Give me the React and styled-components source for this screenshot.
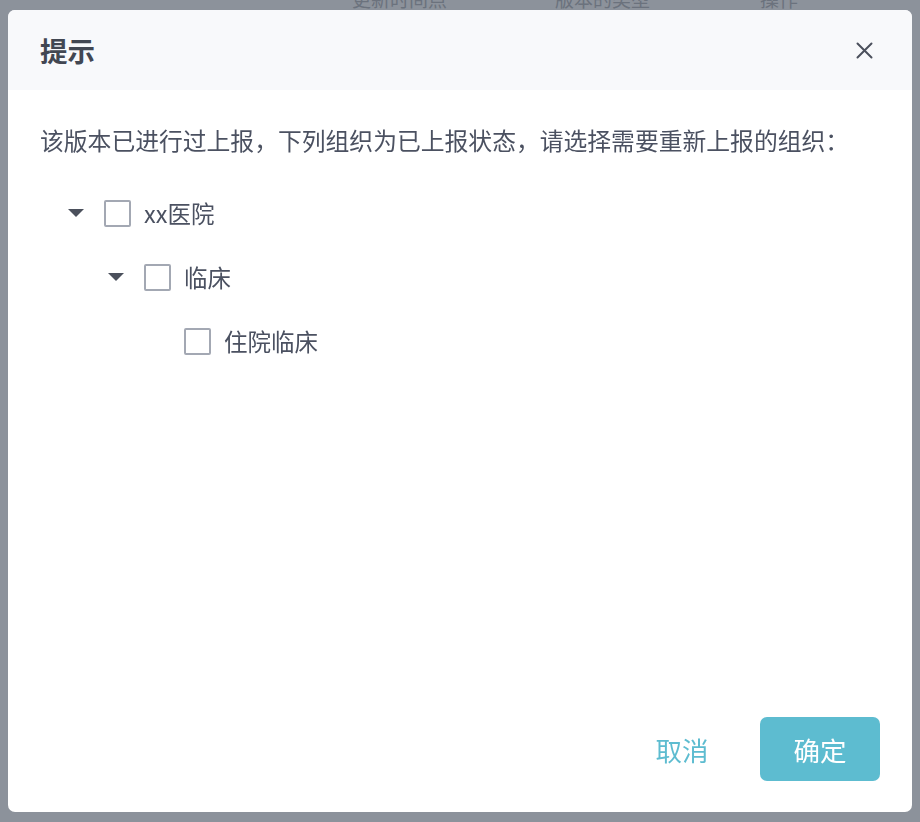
import React, { useState } from 'react'
import styled, { createGlobalStyle } from 'styled-components'

const GlobalStyle = createGlobalStyle`
  html, body {
    margin: 0;
    padding: 0;
    background: #ffffff;
    font-family: "Noto Sans CJK SC", "Noto Sans", "Liberation Sans", sans-serif;
  }
  * {
    box-sizing: border-box;
  }
`

const tree = [
  {
    id: 'hospital',
    label: 'xx医院',
    children: [
      {
        id: 'clinic',
        label: '临床',
        children: [{ id: 'inpatient', label: '住院临床', children: [] }],
      },
    ],
  },
]

const Page = styled.div`
  height: 822px;
  overflow: hidden;
`

const PageHeader = styled.div`
  display: grid;
  grid-template-columns: 203px 205px 1fr;
  padding-left: 352px;
  margin-top: -12px;
  font-size: 19px;
  line-height: 22px;
  color: #bdbfc3;
`

const Overlay = styled.div`
  position: fixed;
  inset: 0;
  background: rgba(25, 37, 55, 0.5);
  display: flex;
  align-items: center;
  justify-content: center;
`

const Dialog = styled.div`
  width: 904px;
  height: 802px;
  background: #ffffff;
  border-radius: 7px;
  overflow: hidden;
  display: flex;
  flex-direction: column;
`

const Header = styled.div`
  height: 80px;
  flex: none;
  background: #f8f9fb;
  display: flex;
  align-items: center;
  justify-content: space-between;
  padding: 0 38px 0 32px;
`

const Title = styled.h2`
  margin: 0;
  font-size: 27.5px;
  font-weight: 700;
  color: #424752;
`

const CloseButton = styled.button`
  width: 20px;
  height: 20px;
  border: none;
  background: none;
  padding: 0;
  display: flex;
  align-items: center;
  justify-content: center;
  cursor: pointer;
  color: #4b505c;
`

const Body = styled.div`
  flex: 1;
  padding: 34px 32px 0;
`

const Message = styled.p`
  margin: 0 0 25px;
  font-size: 23.8px;
  line-height: 32px;
  color: #4b5161;
  white-space: nowrap;
`

const Row = styled.div`
  display: flex;
  align-items: center;
  height: 64px;
  padding-left: ${(p) => 16 + p.$level * 40}px;
`

const Toggle = styled.span`
  width: 40px;
  height: 40px;
  display: flex;
  align-items: center;
  justify-content: center;
  color: #4b505c;
  cursor: pointer;
`

const Caret = styled.span`
  width: 0;
  height: 0;
  border-left: 8px solid transparent;
  border-right: 8px solid transparent;
  border-top: 8px solid currentColor;
`

const Checkbox = styled.span`
  width: 27px;
  height: 27px;
  margin-left: 8px;
  border: 2px solid #a3a8b3;
  border-radius: 2px;
  background: ${(p) => (p.$checked ? '#5dbcd0' : '#ffffff')};
  cursor: pointer;
`

const Label = styled.span`
  margin-left: 13px;
  font-size: 23.5px;
  color: #4b5161;
`

const Footer = styled.div`
  display: flex;
  justify-content: flex-end;
  gap: 18px;
  padding: 0 32px 31px;
`

const Button = styled.button`
  width: 120px;
  height: 64px;
  border: none;
  border-radius: 7px;
  font-family: inherit;
  font-size: 26.5px;
  cursor: pointer;
  background: ${(p) => (p.$primary ? '#5dbcd0' : 'transparent')};
  color: ${(p) => (p.$primary ? '#ffffff' : '#5dbcd0')};
`

const TreeNode = ({ node, level, checked, onToggle }) => {
  const hasChildren = node.children.length > 0
  return (
    <>
      <Row $level={level}>
        <Toggle>{hasChildren && <Caret />}</Toggle>
        <Checkbox $checked={checked[node.id]} onClick={() => onToggle(node.id)} />
        <Label>{node.label}</Label>
      </Row>
      {node.children.map((child) => (
        <TreeNode
          key={child.id}
          node={child}
          level={level + 1}
          checked={checked}
          onToggle={onToggle}
        />
      ))}
    </>
  )
}

const App = () => {
  const [checked, setChecked] = useState({})
  const toggle = (id) => setChecked((c) => ({ ...c, [id]: !c[id] }))

  return (
    <>
      <GlobalStyle />
      <Page>
        <PageHeader>
          <span>更新时间点</span>
          <span>版本的类型</span>
          <span>操作</span>
        </PageHeader>
      </Page>
      <Overlay>
        <Dialog>
          <Header>
            <Title>提示</Title>
            <CloseButton aria-label="关闭">
              <svg width="17" height="17" viewBox="0 0 17 17">
                <path
                  d="M1.5 1.5 L15.5 15.5 M15.5 1.5 L1.5 15.5"
                  stroke="currentColor"
                  strokeWidth="2"
                  strokeLinecap="round"
                />
              </svg>
            </CloseButton>
          </Header>
          <Body>
            <Message>
              该版本已进行过上报，下列组织为已上报状态，请选择需要重新上报的组织：
            </Message>
            {tree.map((node) => (
              <TreeNode
                key={node.id}
                node={node}
                level={0}
                checked={checked}
                onToggle={toggle}
              />
            ))}
          </Body>
          <Footer>
            <Button>取消</Button>
            <Button $primary>确定</Button>
          </Footer>
        </Dialog>
      </Overlay>
    </>
  )
}

export default App
